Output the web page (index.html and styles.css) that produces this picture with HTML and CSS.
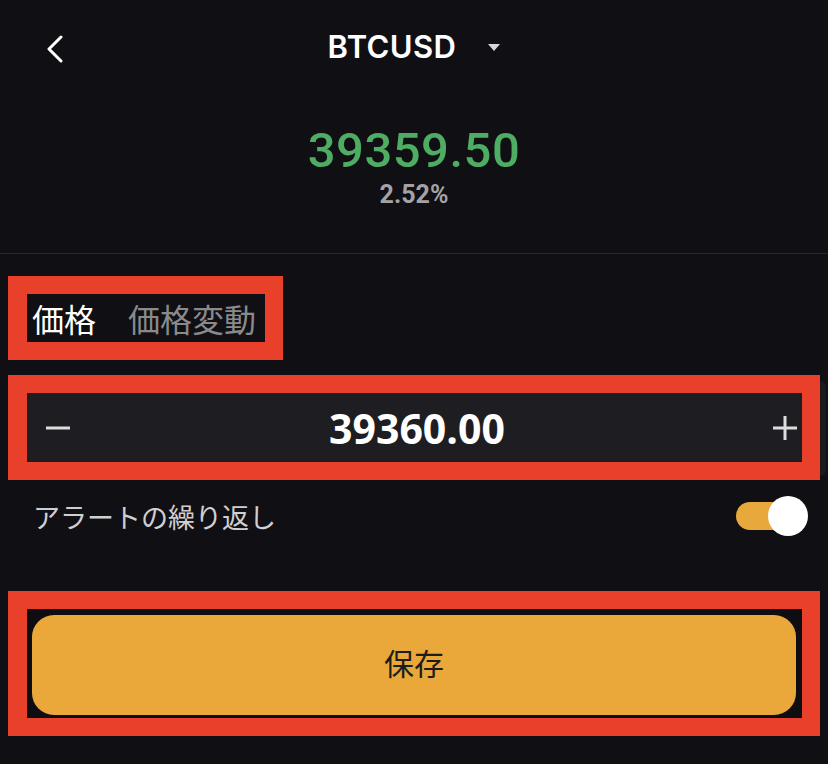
FILE: index.html
```html
<!DOCTYPE html>
<html lang="ja">
<head>
  <meta charset="utf-8" />
  <title>BTCUSD アラート</title>
  <meta name="viewport" content="width=device-width,initial-scale=1" />
  <link rel="stylesheet" href="styles.css">
</head>
<body>
  <header class="top-bar">
    <button class="back-btn" aria-label="戻る">
      <svg width="18" height="28" viewBox="0 0 18 28"><polyline points="15,2 3,14 15,26" fill="none" stroke="#fff" stroke-width="3" stroke-linecap="round" stroke-linejoin="round"/></svg>
    </button>
    <div class="symbol">
      <span class="symbol-name">BTCUSD</span>
      <span class="caret"></span>
    </div>
  </header>

  <section class="quote">
    <div class="quote-price">39359.50</div>
    <div class="quote-change">2.52%</div>
  </section>

  <div class="divider"></div>

  <div class="mark mark-tabs">
    <div class="tabs">
      <span class="tab active">価格</span>
      <span class="tab">価格変動</span>
    </div>
  </div>

  <div class="mark mark-wide mark-field">
    <div class="stepper">
      <button class="step-btn" aria-label="減らす">
        <svg width="24" height="24" viewBox="0 0 24 24"><line x1="0" y1="12" x2="24" y2="12" stroke="#ddd" stroke-width="3"/></svg>
      </button>
      <span class="step-value">39360.00</span>
      <button class="step-btn" aria-label="増やす">
        <svg width="24" height="24" viewBox="0 0 24 24"><line x1="0" y1="12" x2="24" y2="12" stroke="#ddd" stroke-width="3"/><line x1="12" y1="0" x2="12" y2="24" stroke="#ddd" stroke-width="3"/></svg>
      </button>
    </div>
  </div>

  <div class="repeat-row">
    <span class="repeat-label">アラートの繰り返し</span>
    <span class="toggle on"><span class="knob"></span></span>
  </div>

  <div class="mark mark-wide mark-save">
    <button class="save-btn">保存</button>
  </div>
</body>
</html>
```

FILE: styles.css
```css
body {
  background: #101014;
  font-family: Roboto, 'Noto Sans CJK JP', sans-serif;
  color: #fff;
  margin: 0;
  padding: 0;
  width: 828px;
  height: 764px;
  overflow: hidden;
}
button {
  background: none;
  border: none;
  padding: 0;
  margin: 0;
  cursor: pointer;
  font-family: inherit;
}
.top-bar {
  position: relative;
  height: 92px;
  display: flex;
  align-items: center;
  justify-content: center;
}
.back-btn {
  position: absolute;
  left: 46px;
  top: 35px;
  display: flex;
}
.symbol {
  display: flex;
  align-items: center;
  gap: 32px;
}
.symbol-name {
  font-family: Inter, sans-serif;
  font-size: 31px;
  font-weight: 600;
  letter-spacing: 0.4px;
}
.caret {
  width: 0;
  height: 0;
  border-left: 6px solid transparent;
  border-right: 6px solid transparent;
  border-top: 7px solid #d8d8d8;
  margin-top: 2px;
}
.quote {
  text-align: center;
  padding-top: 34px;
}
.quote-price {
  font-size: 49px;
  line-height: 49px;
  font-weight: 500;
  color: #4fac63;
  letter-spacing: 0.5px;
}
.quote-change {
  margin-top: 8px;
  font-size: 25px;
  line-height: 24px;
  font-weight: 700;
  color: #a3a3a6;
}
.divider {
  height: 1px;
  background: #26262b;
  margin-top: 46px;
}
.mark {
  box-sizing: border-box;
  border: 18px solid #e8402a;
  margin-left: 8px;
}
.mark-tabs {
  width: 275px;
  height: 84px;
  margin-top: 22px;
  border-left-width: 19px;
}
.tabs {
  height: 48px;
  display: flex;
  align-items: center;
  gap: 32px;
  padding-left: 5px;
  font-size: 32px;
}
.tab { color: #8a8a8c; }
.tab.active { color: #fff; }
.mark-wide {
  width: 812px;
  border-left-width: 19px;
}
.mark-field {
  position: relative;
  height: 105px;
  margin-top: 15px;
}
/* the field's rounded end shows past the highlight */
.mark-field::after {
  content: '';
  position: absolute;
  top: -12px;
  bottom: -14px;
  right: -24px;
  width: 6px;
  border-radius: 0 8px 8px 0;
  background: #1a1a1e;
}
.stepper {
  height: 69px;
  background: #1e1e22;
  display: flex;
  align-items: center;
  padding: 0 5px 0 19px;
}
.step-btn { display: flex; }
.step-value {
  flex: 1;
  text-align: center;
  font-family: 'Open Sans', sans-serif;
  font-size: 41px;
  font-weight: 700;
  padding-right: 9px;
}
.repeat-row {
  height: 76px;
  display: flex;
  align-items: center;
  justify-content: space-between;
  padding: 0 20px 4px 33px;
  box-sizing: border-box;
}
.repeat-label {
  font-size: 27px;
  color: #cfcfd2;
}
.toggle {
  position: relative;
  width: 60px;
  height: 28px;
  border-radius: 14px;
  background: #e9a83b;
  margin-right: 12px;
}
.knob {
  position: absolute;
  right: -12px;
  top: -6px;
  width: 40px;
  height: 40px;
  border-radius: 50%;
  background: #fff;
}
.mark-save {
  height: 145px;
  margin-top: 35px;
  padding: 6px 6px 4px 5px;
  background: #0e0e12;
}
.save-btn {
  width: 100%;
  height: 100px;
  border-radius: 22px;
  background: #eaa83a;
  color: #1d1d1d;
  font-size: 30px;
  padding-bottom: 6px;
}
```
